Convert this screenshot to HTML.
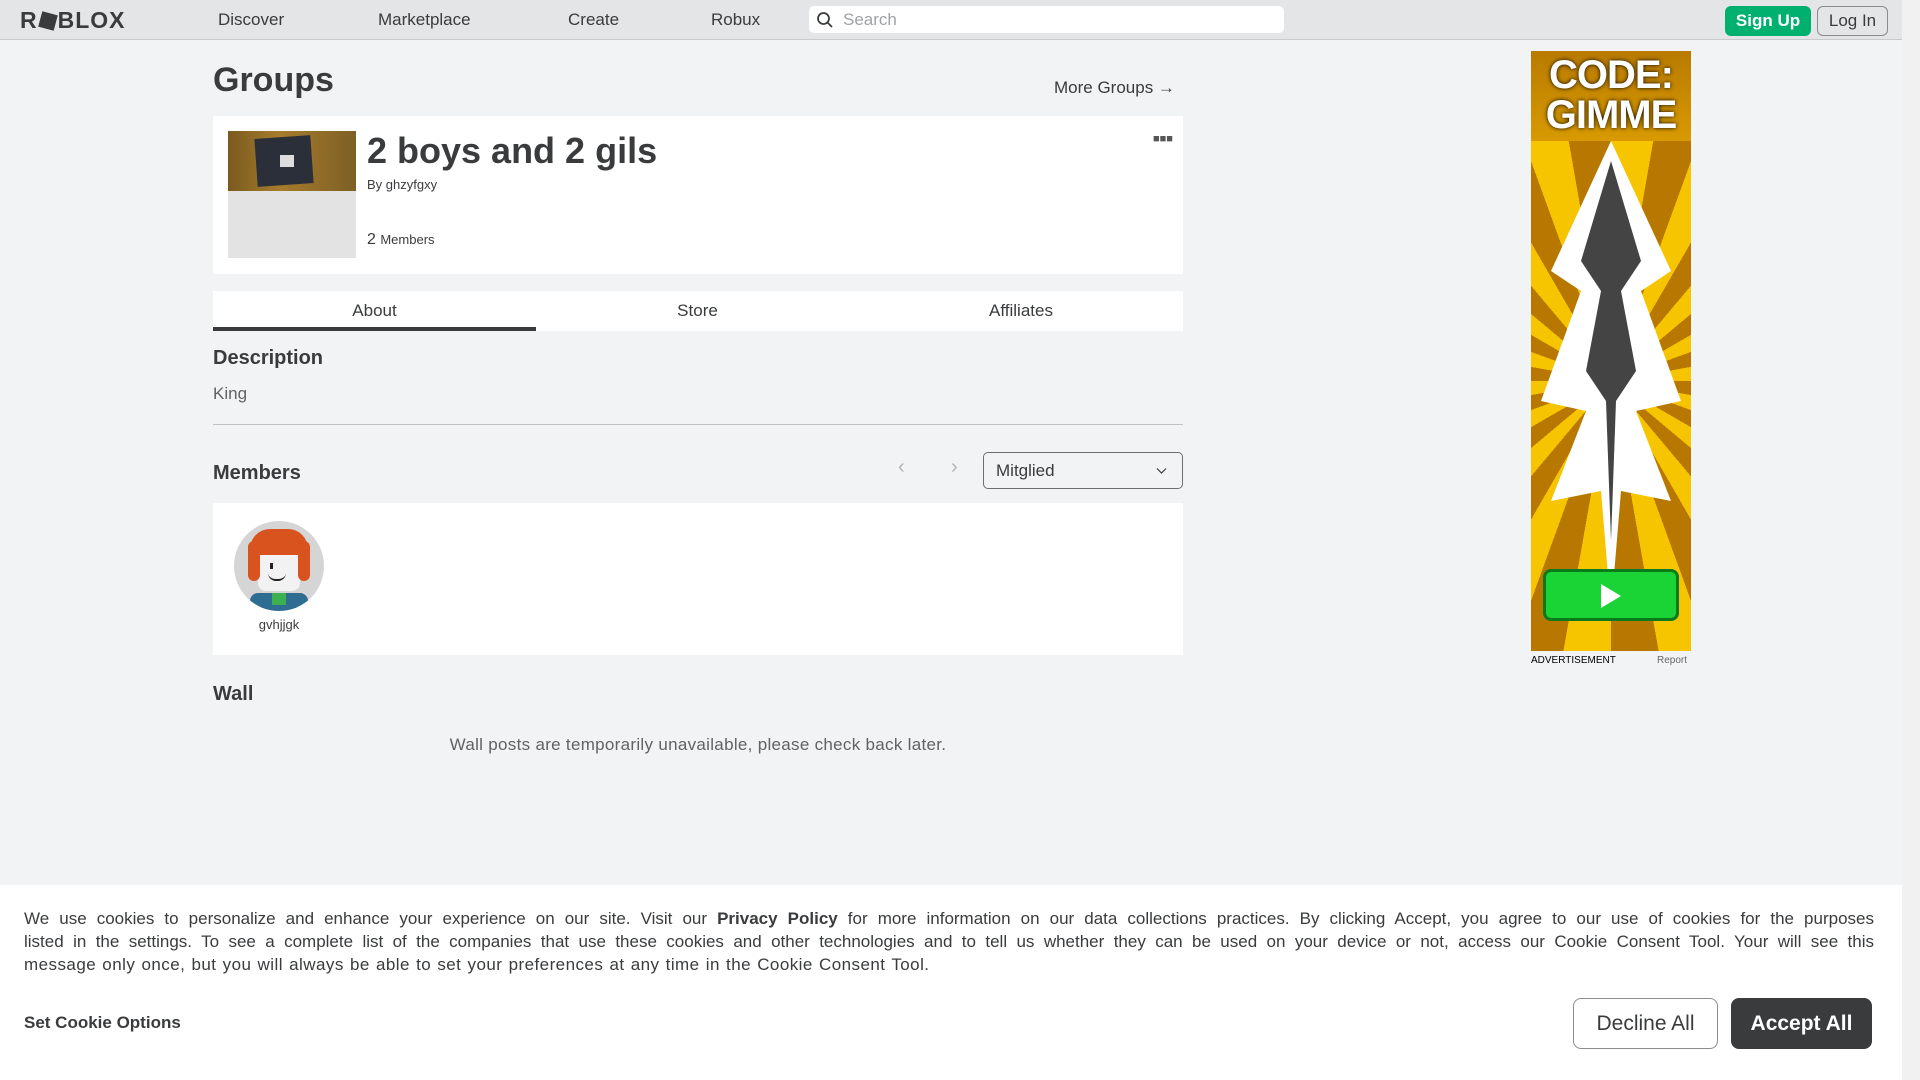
<!DOCTYPE html>
<html><head><meta charset="utf-8"><style>
*{box-sizing:border-box;margin:0;padding:0}
body{width:1920px;height:1080px;overflow:hidden;background:#f2f3f5;font-family:"Liberation Sans",sans-serif;color:#393b3d;position:relative}
.abs{position:absolute}
#hdr{left:0;top:0;width:1902px;height:40px;background:#e3e5e7;border-bottom:1px solid #c8cacc}
.nav{top:10px;font-size:17px;color:#393b3d}
#sb{left:1902px;top:0;width:18px;height:1080px;background:#f1f1f1}
.card{background:#fff}
.btn{border-radius:8px;text-align:center}
.jl{display:block;text-align:justify;text-align-last:justify;width:1850px;white-space:nowrap}
</style></head><body>
<div id="hdr" class="abs">
  <div class="abs" style="left:20px;top:7px;font-size:23px;font-weight:bold;letter-spacing:1px;color:#393b3d">R<span style="display:inline-block;width:16px;height:16px;background:#393b3d;transform:rotate(15deg);vertical-align:-1px;margin:0 2px"></span>BLOX</div>
  <div class="abs nav" style="left:218px">Discover</div>
  <div class="abs nav" style="left:378px">Marketplace</div>
  <div class="abs nav" style="left:568px">Create</div>
  <div class="abs nav" style="left:711px">Robux</div>
  <div class="abs" style="left:809px;top:6px;width:475px;height:27px;background:#fff;border-radius:5px">
    <svg class="abs" style="left:7px;top:5px" width="18" height="18" viewBox="0 0 18 18"><circle cx="7.5" cy="7.5" r="5.5" fill="none" stroke="#393b3d" stroke-width="1.8"/><path d="M11.5 11.5L16 16" stroke="#393b3d" stroke-width="1.8"/></svg>
    <div class="abs" style="left:34px;top:4px;font-size:17px;color:#a0a2a4">Search</div>
  </div>
  <div class="abs btn" style="left:1725px;top:6px;width:86px;height:30px;background:#00b06f;color:#fff;font-weight:bold;font-size:17px;line-height:30px;border-radius:6px">Sign Up</div>
  <div class="abs btn" style="left:1817px;top:6px;width:71px;height:30px;border:1px solid #8a8c8e;color:#393b3d;font-size:17px;line-height:28px;border-radius:6px">Log In</div>
</div>
<div id="sb" class="abs"></div>

<div class="abs" style="left:213px;top:61px;font-size:34px;font-weight:bold">Groups</div>
<div class="abs" style="left:1054px;top:78px;font-size:17px">More Groups &#8594;</div>

<div class="abs card" style="left:213px;top:116px;width:970px;height:158px">
  <div class="abs" style="left:15px;top:15px;width:128px;height:127px;background:#e3e3e3"></div>
  <div class="abs" style="left:15px;top:15px;width:128px;height:60px;background:linear-gradient(90deg,#7a5a20,#a67c2c 40%,#7d5f25)">
    <div class="abs" style="left:28px;top:6px;width:56px;height:48px;background:#2b2f3a;transform:rotate(-4deg)"></div>
    <div class="abs" style="left:52px;top:24px;width:14px;height:12px;background:#ddd"></div>
  </div>
  <div class="abs" style="left:154px;top:14px;font-size:36px;font-weight:bold;color:#393b3d">2 boys and 2 gils</div>
  <div class="abs" style="left:154px;top:61px;font-size:13px">By ghzyfgxy</div>
  <div class="abs" style="left:154px;top:115px;font-size:16px">2 <span style="font-size:13px">Members</span></div>
  <div class="abs" style="left:940px;top:17px;font-size:11px;letter-spacing:0px;color:#555">&#9632;&#9632;&#9632;</div>
</div>

<div class="abs card" style="left:213px;top:291px;width:970px;height:40px">
  <div class="abs" style="left:0;top:0;width:323px;text-align:center;line-height:40px;font-size:17px">About</div>
  <div class="abs" style="left:0;top:36px;width:323px;height:4px;background:#393b3d"></div>
  <div class="abs" style="left:323px;top:0;width:323px;text-align:center;line-height:40px;font-size:17px">Store</div>
  <div class="abs" style="left:646px;top:0;width:324px;text-align:center;line-height:40px;font-size:17px">Affiliates</div>
</div>

<div class="abs" style="left:213px;top:347px;font-size:20px;font-weight:bold">Description</div>
<div class="abs" style="left:213px;top:384px;font-size:17px;color:#606264">King</div>
<div class="abs" style="left:213px;top:424px;width:970px;height:1px;background:#bfc1c3"></div>

<div class="abs" style="left:213px;top:462px;font-size:20px;font-weight:bold">Members</div>
<div class="abs" style="left:898px;top:456px;font-size:20px;color:#b0b2b4">&#8249;</div>
<div class="abs" style="left:951px;top:456px;font-size:20px;color:#b0b2b4">&#8250;</div>
<div class="abs" style="left:983px;top:452px;width:200px;height:37px;border:1px solid #6c6e70;border-radius:5px">
  <div class="abs" style="left:12px;top:8px;font-size:17px">Mitglied</div>
  <svg class="abs" style="left:172px;top:14px" width="11" height="8" viewBox="0 0 11 8"><path d="M1 1.5L5.5 6L10 1.5" fill="none" stroke="#393b3d" stroke-width="1.2"/></svg>
</div>

<div class="abs card" style="left:213px;top:503px;width:970px;height:152px">
  <div class="abs" style="left:21px;top:18px;width:90px;height:90px;border-radius:50%;background:#d5d5d5;overflow:hidden">
    <div class="abs" style="left:24px;top:18px;width:42px;height:52px;background:#f2f2f2;border-radius:8px"></div>
    <div class="abs" style="left:16px;top:8px;width:58px;height:26px;background:#d9531e;border-radius:20px 20px 4px 4px"></div>
    <div class="abs" style="left:14px;top:20px;width:12px;height:40px;background:#d9531e;border-radius:6px"></div>
    <div class="abs" style="left:64px;top:20px;width:12px;height:40px;background:#d9531e;border-radius:6px"></div>
    <div class="abs" style="left:36px;top:42px;width:3px;height:6px;background:#222"></div>
    <div class="abs" style="left:34px;top:52px;width:18px;height:8px;border-bottom:2px solid #222;border-radius:0 0 10px 10px"></div>
    <div class="abs" style="left:16px;top:72px;width:58px;height:20px;background:#2f6c92;border-radius:8px"></div>
    <div class="abs" style="left:38px;top:72px;width:14px;height:12px;background:#3cb050"></div>
  </div>
  <div class="abs" style="left:21px;top:114px;width:90px;text-align:center;font-size:13px">gvhjjgk</div>
</div>

<div class="abs" style="left:213px;top:683px;font-size:20px;font-weight:bold">Wall</div>
<div class="abs" style="left:213px;top:735px;width:970px;text-align:center;font-size:17px;letter-spacing:0.3px;color:#606264">Wall posts are temporarily unavailable, please check back later.</div>

<div class="abs" style="left:1531px;top:51px;width:160px;height:600px;overflow:hidden;background:repeating-conic-gradient(from 0deg at 50% 55%,#f7c400 0deg 10deg,#b87800 10deg 20deg)">
  <div class="abs" style="left:0;top:0;width:160px;height:90px;background:linear-gradient(#b87a00,#d89a00)"></div>
  <div class="abs" style="left:0;top:4px;width:160px;text-align:center;font-size:40px;font-weight:bold;color:#fff;line-height:40px;letter-spacing:-1px;text-shadow:0 0 4px #000">CODE:<br>GIMME</div>
  <svg class="abs" style="left:0;top:90px" width="160" height="470" viewBox="0 0 160 470">
    <path d="M80 0L20 130L50 150L10 260L55 270L20 360L70 350L80 470L90 350L140 360L105 270L150 260L110 150L140 130Z" fill="#fff"/>
    <path d="M80 20L50 120L70 150L55 230L75 260L80 400L85 260L105 230L90 150L110 120Z" fill="#444"/>
  </svg>
  <div class="abs" style="left:12px;top:518px;width:136px;height:52px;background:#19d434;border:3px solid #0a7a1a;border-radius:8px"></div>
  <svg class="abs" style="left:68px;top:532px" width="24" height="26"><path d="M2 1L22 13L2 25Z" fill="#fff"/></svg>
</div>
<div class="abs" style="left:1531px;top:655px;font-size:10px;color:#000">ADVERTISEMENT</div>
<div class="abs" style="left:1657px;top:655px;font-size:10px;color:#666">Report</div>

<div class="abs" style="left:0;top:885px;width:1902px;height:195px;background:#fff">
  <div class="abs" style="left:24px;top:22px;width:1850px;font-size:17px;line-height:23px;color:#393b3d">
    <span class="jl">We use cookies to personalize and enhance your experience on our site. Visit our <b>Privacy Policy</b> for more information on our data collections practices. By clicking Accept, you agree to our use of cookies for the purposes</span>
    <span class="jl">listed in the settings. To see a complete list of the companies that use these cookies and other technologies and to tell us whether they can be used on your device or not, access our Cookie Consent Tool. Your will see this</span>
    <span style="display:block;letter-spacing:0.45px;word-spacing:1px">message only once, but you will always be able to set your preferences at any time in the Cookie Consent Tool.</span>
  </div>
  <div class="abs" style="left:24px;top:128px;font-size:17px;font-weight:bold">Set Cookie Options</div>
  <div class="abs btn" style="left:1573px;top:113px;width:145px;height:51px;border:1px solid #8a8c8e;line-height:49px;font-size:21px">Decline All</div>
  <div class="abs btn" style="left:1731px;top:113px;width:141px;height:51px;background:#393b3d;color:#fff;line-height:51px;font-size:21px;font-weight:bold">Accept All</div>
</div>
</body></html>
